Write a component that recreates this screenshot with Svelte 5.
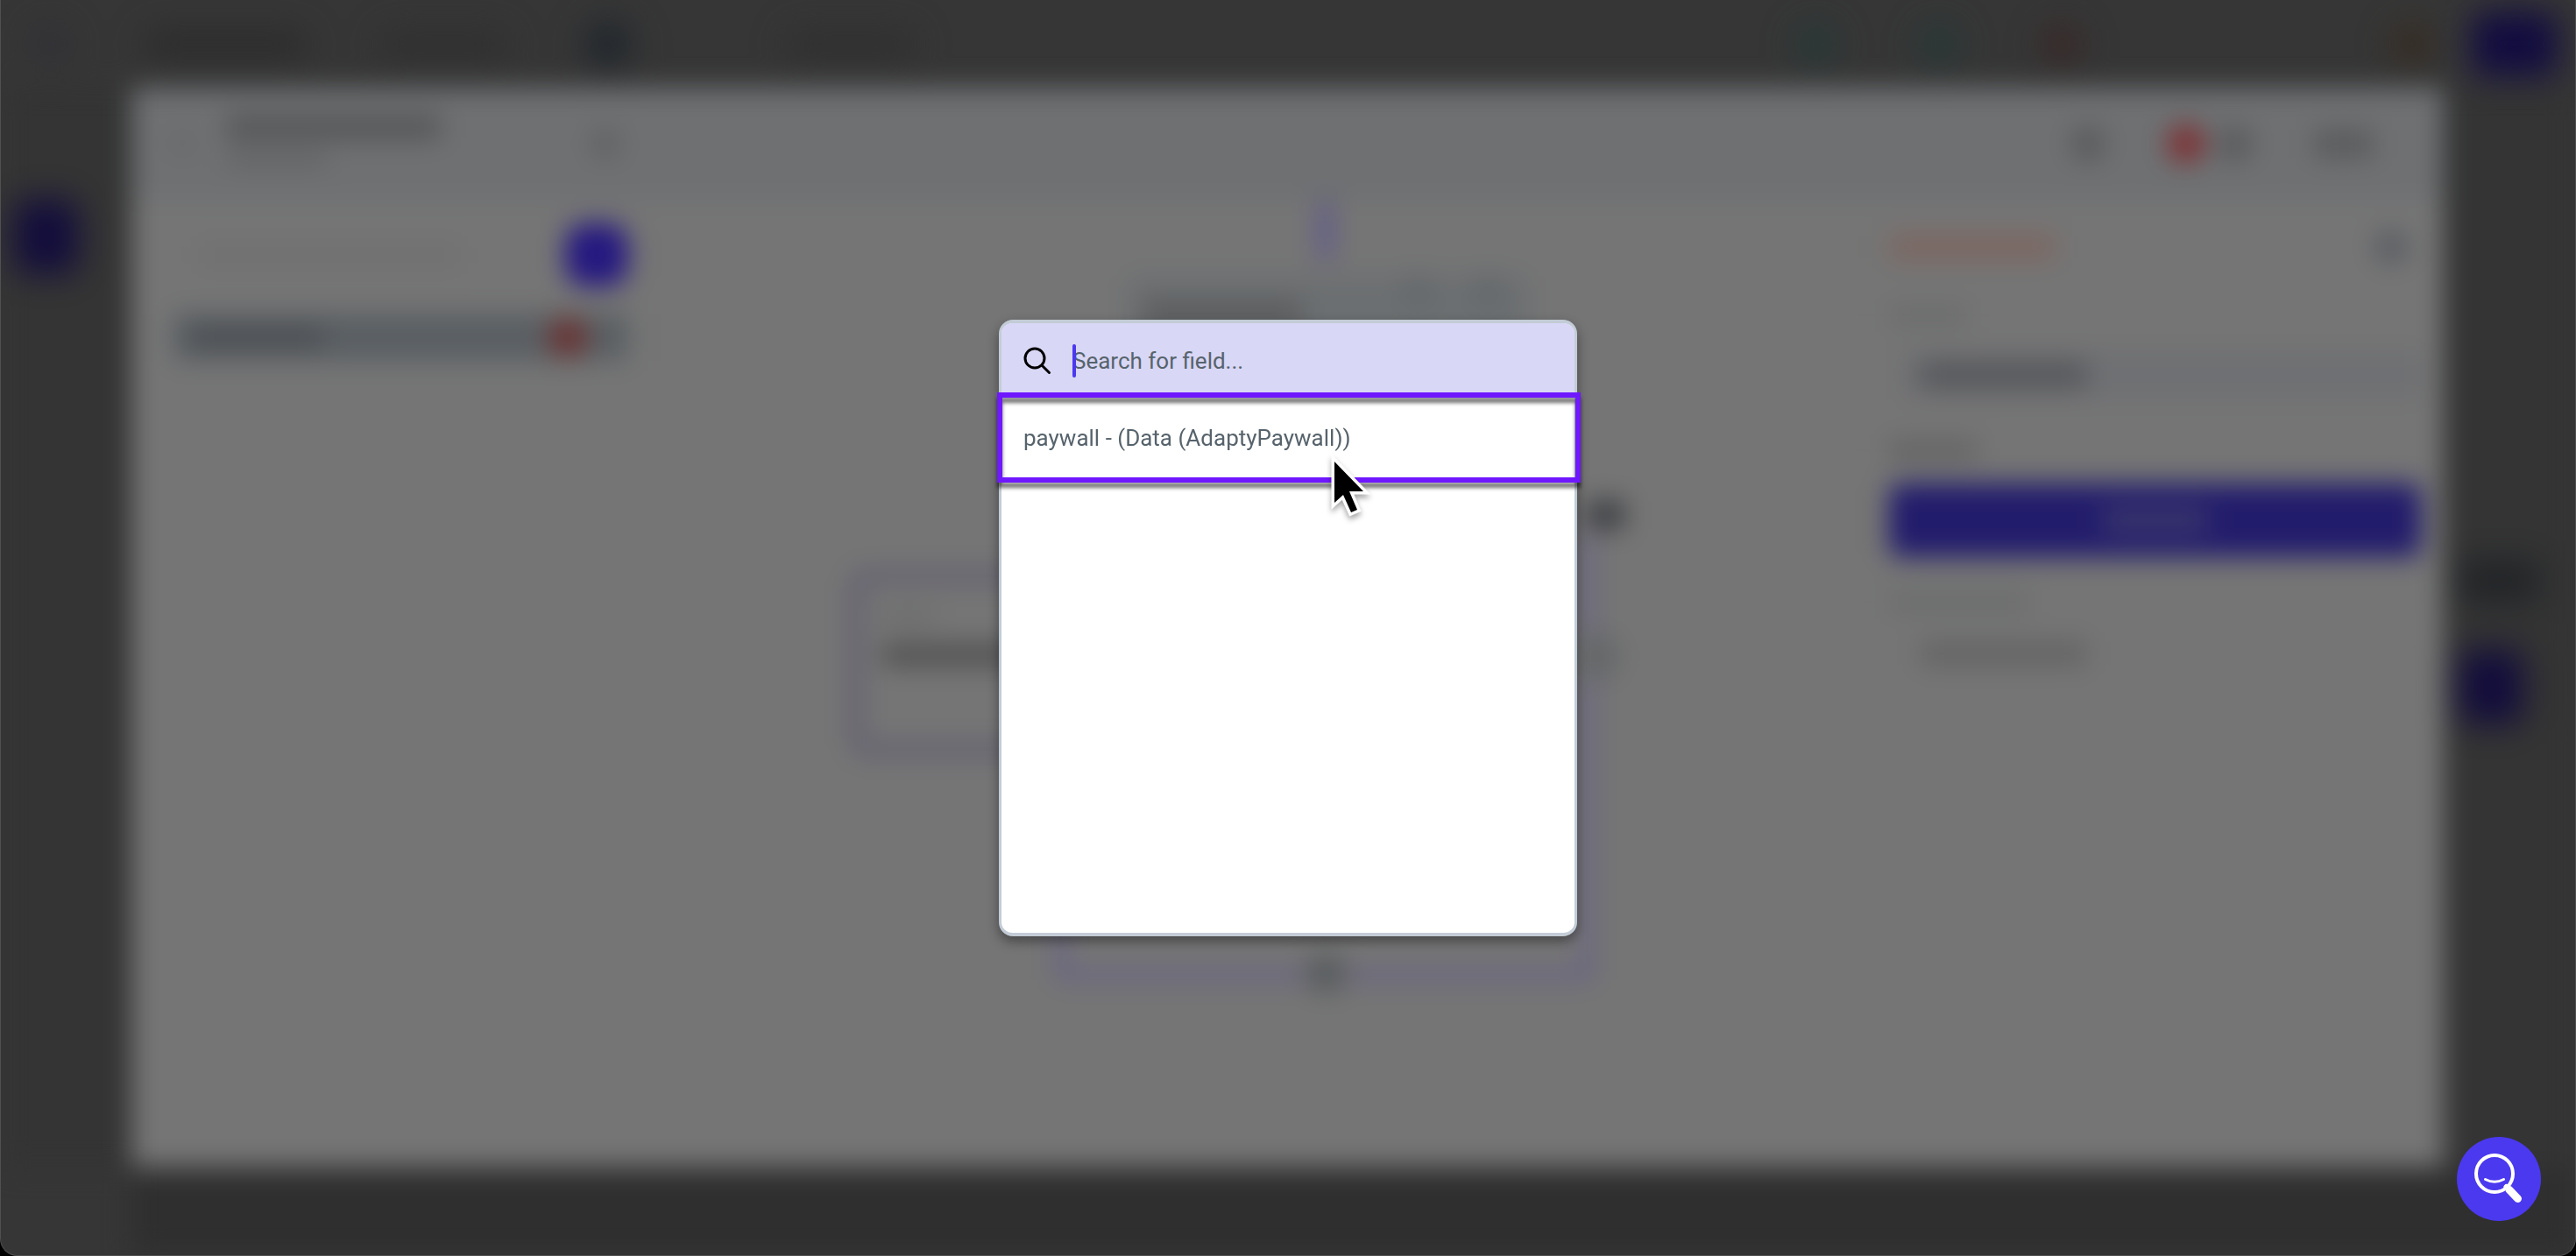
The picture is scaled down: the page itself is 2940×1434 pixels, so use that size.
<script>
  let query = $state('');
  const fields = ['paywall - (Data (AdaptyPaywall))'];
  const shown = $derived(fields.filter((f) => f.toLowerCase().includes(query.toLowerCase())));
</script>

<div class="window">
  <div class="backdrop" aria-hidden="true">
    <div class="topbar">
      <div class="group start">
        <i class="dot logo"></i>
        <i class="line name"></i>
        <i class="line page"></i>
        <i class="dot device"></i>
        <i class="line zoom"></i>
      </div>
      <div class="group end">
        <i class="dot teal"></i>
        <i class="dot teal"></i>
        <i class="dot alert"></i>
        <i class="dot spark"></i>
        <i class="run"></i>
      </div>
    </div>

    <div class="rail left"><i class="tab"></i></div>

    <div class="editor">
      <div class="editor-head">
        <div class="group">
          <i class="dot back"></i>
          <div class="titles">
            <i class="line title"></i>
            <i class="line sub"></i>
          </div>
          <i class="dot edit"></i>
        </div>
        <div class="group actions">
          <i class="dot icon"></i>
          <div class="badge-pair"><i class="dot error"></i><i class="dot icon"></i></div>
          <i class="line close"></i>
        </div>
      </div>

      <div class="editor-body">
        <div class="flows">
          <div class="flow-search"><i class="line hint"></i><i class="add"></i></div>
          <div class="flow-row"><i class="line label"></i><i class="dot issue"></i></div>
        </div>

        <svg class="canvas" viewBox="-7 0 1364 1104" preserveAspectRatio="xMidYMin meet">
          <rect x="745" y="2" width="14" height="66" fill="#5a5290" />
          <rect x="525" y="86" width="460" height="80" rx="10" fill="#6c6f71" />
          <rect x="545" y="116" width="180" height="30" fill="#5a5b5d" />
          <circle cx="858" cy="104" r="20" fill="#65696c" />
          <circle cx="938" cy="104" r="20" fill="#65696c" />
          <path d="M450 450V886H1052V380" fill="none" stroke="#666084" stroke-width="12" />
          <path d="M1050 360H1094" stroke="#3c3e42" stroke-width="32" />
          <circle cx="1062" cy="522" r="26" fill="#646768" />
          <rect x="216" y="430" width="400" height="198" rx="12" fill="none" stroke="#636070" stroke-width="16" />
          <rect x="246" y="470" width="60" height="14" fill="#696a69" />
          <rect x="246" y="508" width="240" height="24" fill="#4f4f4f" />
          <circle cx="753" cy="884" r="22" fill="#575b5c" />
        </svg>

        <div class="props">
          <div class="props-head"><i class="line heading"></i><i class="dot trash"></i></div>
          <i class="line caption"></i>
          <div class="select filled"><i class="line value"></i></div>
          <i class="line caption strong"></i>
          <div class="primary"><i class="line"></i></div>
          <i class="line caption wide"></i>
          <div class="select last"><i class="line value pale"></i></div>
        </div>
      </div>
    </div>

    <div class="rail right"><i class="pill"></i><i class="tab"></i></div>
    <div class="bottom"></div>
  </div>

  <div class="overlay">
    <div class="dialog" role="dialog" aria-label="Choose a field">
      <label class="search">
        <svg class="search-icon" viewBox="0 0 32 32" aria-hidden="true">
          <circle cx="13" cy="13" r="11" />
          <path d="M21 21L29.500 29.500" />
        </svg>
        <span class="entry">
          <input type="text" aria-label="Search for field" placeholder="Search for field..." bind:value={query} />
          <span class="caret"></span>
        </span>
      </label>
      <ul class="results">
        {#each shown as field}
          <li>
            <button type="button" class="option">{field}</button>
            <span class="frame"></span>
            <svg class="pointer" viewBox="0 0 52 80" aria-hidden="true">
              <path d="M6 12V59L16 50L25 70L32 67L23 46H39Z" stroke="#fff" stroke-width="7" fill="#fff" />
              <path d="M6 12V59L16 50L25 70L32 67L23 46H39Z" />
            </svg>
          </li>
        {/each}
      </ul>
    </div>
  </div>

  <button type="button" class="help" aria-label="Search help">
    <svg viewBox="0 0 96 96" aria-hidden="true">
      <circle cx="43" cy="42" r="21" stroke-width="4" />
      <path d="M32.500 48.500Q43 54 53.500 48.500" stroke-width="3" />
      <path d="M56.500 57L58 58.500" stroke-width="6" />
      <path d="M60 60.500L69.500 70.500" stroke-width="9" />
    </svg>
  </button>
</div>

<style>
  :global(body) {
    margin: 0;
    background: #000;
  }
  .window {
    position: relative;
    display: grid;
    box-sizing: border-box;
    min-height: 100vh;
    overflow: hidden;
    background: #363636;
    border: 1px solid #505050;
    border-top: 0;
    border-radius: 0 0 20px 20px;
    font-family: Roboto, 'Open Sans', sans-serif;
  }
  .backdrop {
    display: grid;
    grid-template: 100px 1fr 100px / 149px 1fr 150px;
    filter: blur(15px);
  }
  i {
    display: block;
    flex: none;
  }
  .group {
    display: flex;
    align-items: center;
  }
  .line {
    height: 24px;
    background: #606264;
  }
  .dot {
    width: 40px;
    height: 40px;
    border-radius: 50%;
  }

  .topbar {
    grid-column: 1 / -1;
    display: flex;
    justify-content: space-between;
    padding: 0 20px 0 36px;
  }
  .topbar i,
  .rail i {
    filter: blur(12px);
  }
  .start {
    gap: 90px;
  }
  .logo {
    background: #303038;
  }
  .name,
  .page,
  .zoom {
    width: 180px;
    background: #292929;
  }
  .page,
  .zoom {
    width: 140px;
    background: #2e2e2e;
  }
  .device {
    width: 54px;
    height: 54px;
    background: #20262c;
  }
  .zoom {
    margin-left: 90px;
  }
  .end {
    gap: 100px;
  }
  .teal {
    background: #223a37;
  }
  .alert {
    background: #3a2424;
  }
  .spark {
    margin-left: 260px;
    background: #36281a;
  }
  .run {
    width: 98px;
    height: 74px;
    margin-left: -52px;
    border-radius: 12px;
    background: #120c40;
  }

  .rail {
    display: flex;
    flex-direction: column;
    background: #343434;
  }
  .left {
    padding: 128px 0 0 16px;
  }
  .right {
    gap: 56px;
    padding: 540px 0 0 18px;
  }
  .tab {
    width: 72px;
    height: 84px;
    border-radius: 16px;
    background: #120c3c;
  }
  .pill {
    width: 90px;
    height: 46px;
    background: #212427;
  }
  .bottom {
    grid-column: 2 / -1;
    background: #2f2f2f;
  }

  .editor {
    display: flex;
    flex-direction: column;
    background: #757575;
  }
  .editor-head {
    display: flex;
    justify-content: space-between;
    height: 128px;
    padding: 0 80px 0 44px;
    background: #6e7072;
  }
  .back {
    width: 28px;
    height: 28px;
    margin-right: 36px;
    background: #67696b;
  }
  .titles {
    display: grid;
    gap: 14px;
    width: 416px;
    padding-bottom: 8px;
  }
  .title {
    width: 245px;
    height: 28px;
    background: #545658;
  }
  .sub {
    width: 115px;
    height: 16px;
  }
  .edit {
    width: 34px;
    height: 34px;
    background: #5f6163;
  }
  .actions {
    gap: 70px;
  }
  .icon {
    background: #585a5c;
  }
  .badge-pair {
    display: flex;
    align-items: center;
    gap: 14px;
  }
  .error {
    width: 44px;
    height: 44px;
    background: #7e3033;
  }
  .close {
    width: 68px;
    height: 32px;
    background: #5a5b5c;
  }

  .editor-body {
    display: grid;
    grid-template-columns: 604px 1fr 672px;
    flex: 1;
  }
  .flows {
    padding: 30px 34px 0 48px;
    border-right: 3px solid #6f6f6f;
  }
  .flow-search {
    display: flex;
    align-items: center;
    justify-content: space-between;
    height: 66px;
    padding-left: 28px;
  }
  .hint {
    width: 300px;
    background: #717070;
  }
  .add {
    width: 72px;
    height: 72px;
    border-radius: 24px;
    background: #251880;
  }
  .flow-row {
    display: flex;
    align-items: center;
    justify-content: space-between;
    height: 54px;
    margin-top: 34px;
    padding: 0 46px 0 20px;
    background: #5a5f63;
  }
  .label {
    width: 150px;
    background: #4c4e52;
  }
  .issue {
    width: 46px;
    height: 46px;
    background: #6a3434;
  }
  .canvas {
    width: 100%;
  }

  .props {
    display: flex;
    flex-direction: column;
    padding: 34px 26px 0 36px;
    border-left: 3px solid #6f6f6f;
  }
  .props-head {
    display: flex;
    align-items: center;
    justify-content: space-between;
    padding-right: 14px;
  }
  .heading {
    width: 190px;
    height: 28px;
    background: #7c6660;
  }
  .trash {
    background: #5b5e63;
  }
  .caption {
    width: 90px;
    height: 20px;
    margin-top: 48px;
    background: #696b6a;
  }
  .strong {
    width: 100px;
    background: #616161;
  }
  .wide {
    width: 160px;
    margin-top: 42px;
  }
  .select {
    display: flex;
    align-items: center;
    height: 56px;
    margin: 30px 0 0 16px;
    padding-left: 20px;
  }
  .filled {
    background: #6f7073;
  }
  .last {
    margin-top: 20px;
  }
  .value {
    width: 190px;
    height: 28px;
    background: #555659;
  }
  .pale {
    background: #636463;
  }
  .primary {
    display: flex;
    align-items: center;
    justify-content: center;
    height: 84px;
    margin-top: 28px;
    border-radius: 12px;
    background: #221c6c;
  }
  .primary .line {
    width: 120px;
    background: #3e3c6c;
  }

  .overlay {
    position: absolute;
    inset: 0;
    display: flex;
    align-items: center;
    justify-content: center;
  }
  .dialog {
    display: flex;
    flex-direction: column;
    box-sizing: border-box;
    width: 660px;
    min-height: 704px;
    border: solid #c3ccd6;
    border-width: 4px 3px;
    border-radius: 16px;
    background: #fff;
    box-shadow: 0 6px 14px rgba(0, 0, 0, 0.4);
  }
  .search {
    display: flex;
    align-items: center;
    gap: 24px;
    height: 86px;
    padding: 0 25px;
    border-radius: 12px 12px 0 0;
    background: #d8d7f5;
  }
  .search-icon {
    width: 32px;
    height: 32px;
    fill: none;
    stroke: #000;
    stroke-width: 3;
    stroke-linecap: round;
  }
  .entry {
    position: relative;
    flex: 1;
  }
  input {
    display: block;
    box-sizing: border-box;
    width: 100%;
    height: 38px;
    padding: 0;
    border: 0;
    outline: 0;
    background: none;
    color: #57636c;
    font: 26px/38px Roboto, 'Open Sans', sans-serif;
  }
  input::placeholder {
    color: #57636c;
    opacity: 1;
  }
  .caret {
    position: absolute;
    top: 0;
    left: 0;
    width: 4px;
    height: 38px;
    border-radius: 2px;
    background: #4b39ef;
  }
  .results {
    margin: 0;
    padding: 0;
    list-style: none;
  }
  li {
    position: relative;
  }
  .option {
    display: block;
    width: 100%;
    height: 90px;
    padding: 0 25px;
    border: 0;
    background: none;
    color: #57636c;
    font: 26px/38px Roboto, 'Open Sans', sans-serif;
    text-align: left;
  }
  .frame {
    position: absolute;
    inset: -7px -7px -6px -5px;
    border: 6px solid #6f18ff;
    filter: drop-shadow(0 6px 2px rgba(0, 0, 0, 0.55));
    pointer-events: none;
  }
  .pointer {
    position: absolute;
    top: 60px;
    left: 374px;
    width: 52px;
    height: 80px;
    overflow: visible;
    filter: drop-shadow(0 4px 3px rgba(0, 0, 0, 0.35));
    pointer-events: none;
  }

  .help {
    position: absolute;
    right: 39px;
    bottom: 39px;
    width: 96px;
    height: 96px;
    padding: 0;
    border: 0;
    border-radius: 50%;
    background: #4b39ef;
  }
  .help svg {
    display: block;
    width: 96px;
    height: 96px;
    fill: none;
    stroke: #fff;
    stroke-linecap: round;
  }
</style>
